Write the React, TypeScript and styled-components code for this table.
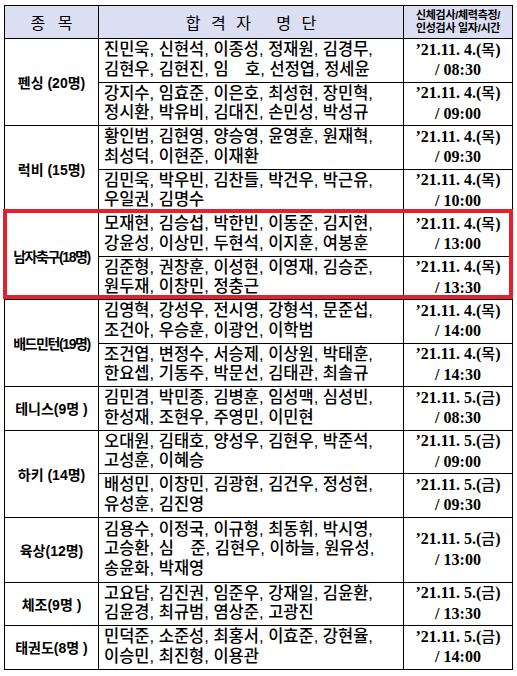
import React from 'react';
import styled, { createGlobalStyle } from 'styled-components';

const GlobalStyle = createGlobalStyle`
  html, body { margin: 0; padding: 0; background: #ffffff; }
  body { font-family: "Liberation Sans", "Noto Sans CJK KR", sans-serif; color: #000; }
`;

const KR = '"Liberation Sans", "Noto Sans CJK KR", sans-serif';
const SERIF = '"Liberation Serif", "Noto Sans CJK KR", serif';

type SubRow = { lines: string[]; date: string; time: string };
type Sport = { name: string; tight?: boolean; rows: SubRow[] };

const THU = '’21.11. 4.(목)';
const FRI = '’21.11. 5.(금)';

const sports: Sport[] = [
  {
    name: '펜싱 (20명)',
    rows: [
      { lines: ['진민욱, 신현석, 이종성, 정재원, 김경무,', '김현우, 김현진, 임　호, 선정엽, 정세윤'], date: THU, time: '08:30' },
      { lines: ['강지수, 임효준, 이은호, 최성현, 장민혁,', '정시환, 박유비, 김대진, 손민성, 박성규'], date: THU, time: '09:00' },
    ],
  },
  {
    name: '럭비 (15명)',
    rows: [
      { lines: ['황인범, 김현영, 양승영, 윤영훈, 원재혁,', '최성덕, 이현준, 이재환'], date: THU, time: '09:30' },
      { lines: ['김민욱, 박우빈, 김찬들, 박건우, 박근유,', '우일권, 김명수'], date: THU, time: '10:00' },
    ],
  },
  {
    name: '남자축구(18명)',
    tight: true,
    rows: [
      { lines: ['모재현, 김승섭, 박한빈, 이동준, 김지현,', '강윤성, 이상민, 두현석, 이지훈, 여봉훈'], date: THU, time: '13:00' },
      { lines: ['김준형, 권창훈, 이성현, 이영재, 김승준,', '원두재, 이창민, 정충근'], date: THU, time: '13:30' },
    ],
  },
  {
    name: '배드민턴(19명)',
    tight: true,
    rows: [
      { lines: ['김영혁, 강성우, 전시영, 강형석, 문준섭,', '조건아, 우승훈, 이광언, 이학범'], date: THU, time: '14:00' },
      { lines: ['조건엽, 변정수, 서승제, 이상원, 박태훈,', '한요셉, 기동주, 박문선, 김태관, 최솔규'], date: THU, time: '14:30' },
    ],
  },
  {
    name: '테니스(9명 )',
    rows: [
      { lines: ['김민겸, 박민종, 김병훈, 임성맥, 심성빈,', '한성재, 조현우, 주영민, 이민현'], date: FRI, time: '08:30' },
    ],
  },
  {
    name: '하키 (14명)',
    rows: [
      { lines: ['오대원, 김태호, 양성우, 김현우, 박준석,', '고성훈, 이혜승'], date: FRI, time: '09:00' },
      { lines: ['배성민, 이창민, 김광현, 김건우, 정성현,', '유성훈, 김진영'], date: FRI, time: '09:30' },
    ],
  },
  {
    name: '육상(12명)',
    rows: [
      { lines: ['김용수, 이정국, 이규형, 최동휘, 박시영,', '고승환, 심　준, 김현우, 이하늘, 원유성,', '송윤화, 박재영'], date: FRI, time: '13:00' },
    ],
  },
  {
    name: '체조(9명 )',
    rows: [
      { lines: ['고요담, 김진권, 임준우, 강재일, 김윤환,', '김윤경, 최규범, 염상준, 고광진'], date: FRI, time: '13:30' },
    ],
  },
  {
    name: '태권도(8명 )',
    rows: [
      { lines: ['민덕준, 소준성, 최홍서, 이효준, 강현율,', '이승민, 최진형, 이용관'], date: FRI, time: '14:00' },
    ],
  },
];

const Page = styled.div`
  padding: 5px 5px 0 4px;
  width: 508px;
`;

const Frame = styled.div`
  position: relative;
  width: 508px;
`;

const Table = styled.table`
  width: 508px;
  border-collapse: collapse;
  table-layout: fixed;
  border: 1.5px solid #000;
`;

const HeadRow = styled.tr`
  height: 33px;
  background: #dcdef2;
`;

const HeadCell = styled.th<{ $spacing: number }>`
  border: 1px solid #000;
  padding: 0;
  padding-left: ${(p) => p.$spacing}px;
  font-family: ${KR};
  font-weight: 400;
  font-size: 16px;
  letter-spacing: ${(p) => p.$spacing}px;
  text-align: center;
  vertical-align: middle;
`;

const HeadSmall = styled.th`
  border: 1px solid #000;
  padding: 0;
  font-family: ${KR};
  font-weight: 700;
  font-size: 11px;
  line-height: 13px;
  letter-spacing: -0.3px;
  text-align: center;
  vertical-align: middle;
`;

const BodyRow = styled.tr<{ $lines: number }>`
  height: ${(p) => (p.$lines > 2 ? 65 : 43.5)}px;
`;

const SportCell = styled.td<{ $tight?: boolean }>`
  border: 1px solid #000;
  padding: 0;
  font-family: ${KR};
  font-weight: 700;
  font-size: 14px;
  letter-spacing: ${(p) => (p.$tight ? '-1.4px' : '0')};
  white-space: nowrap;
  text-align: center;
  vertical-align: middle;
`;

const NamesCell = styled.td`
  border: 1px solid #000;
  padding: 0 0 1px 5px;
  font-family: ${KR};
  font-weight: 500;
  font-size: 16.5px;
  line-height: 19.5px;
  white-space: nowrap;
  text-align: left;
  vertical-align: middle;
`;

const NameLine = styled.div`
  display: block;
`;

const DateCell = styled.td`
  border: 1px solid #000;
  padding: 0 0 1px 0;
  font-family: ${SERIF};
  font-weight: 700;
  font-size: 16px;
  line-height: 19.5px;
  white-space: nowrap;
  text-align: center;
  vertical-align: middle;
`;

const Weekday = styled.span`
  font-weight: 500;
  font-size: 15px;
`;

const Highlight = styled.div`
  position: absolute;
  left: -1px;
  top: 204px;
  width: 510px;
  height: 90px;
  box-sizing: border-box;
  border: 4px solid #e3202c;
  pointer-events: none;
`;

function DateText({ date }: { date: string }) {
  const m = date.match(/^(.*\()(.)(\))$/);
  if (!m) return <>{date}</>;
  return (
    <>
      {m[1]}
      <Weekday>{m[2]}</Weekday>
      {m[3]}
    </>
  );
}

export default function App() {
  return (
    <>
      <GlobalStyle />
      <Page>
        <Frame>
          <Table>
            <colgroup>
              <col style={{ width: 94 }} />
              <col style={{ width: 305 }} />
              <col style={{ width: 109 }} />
            </colgroup>
            <thead>
              <HeadRow>
                <HeadCell $spacing={4}>종 목</HeadCell>
                <HeadCell $spacing={10.5}>합격자 명단</HeadCell>
                <HeadSmall>
                  신체검사/체력측정/
                  <br />
                  인성검사 일자/시간
                </HeadSmall>
              </HeadRow>
            </thead>
            <tbody>
              {sports.map((s) =>
                s.rows.map((r, i) => (
                  <BodyRow key={s.name + i} $lines={r.lines.length}>
                    {i === 0 && (
                      <SportCell rowSpan={s.rows.length} $tight={s.tight}>
                        {s.name}
                      </SportCell>
                    )}
                    <NamesCell>
                      {r.lines.map((l) => (
                        <NameLine key={l}>{l}</NameLine>
                      ))}
                    </NamesCell>
                    <DateCell>
                      <DateText date={r.date} />
                      <br />/ {r.time}
                    </DateCell>
                  </BodyRow>
                ))
              )}
            </tbody>
          </Table>
          <Highlight />
        </Frame>
      </Page>
    </>
  );
}
